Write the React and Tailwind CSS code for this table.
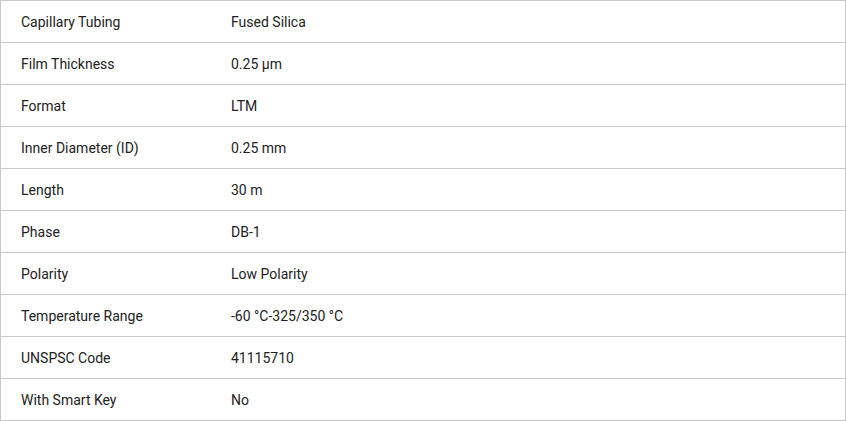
import React from "react";

const rows = [
  ["Capillary Tubing", "Fused Silica"],
  ["Film Thickness", "0.25 µm"],
  ["Format", "LTM"],
  ["Inner Diameter (ID)", "0.25 mm"],
  ["Length", "30 m"],
  ["Phase", "DB-1"],
  ["Polarity", "Low Polarity"],
  ["Temperature Range", "-60 °C-325/350 °C"],
  ["UNSPSC Code", "41115710"],
  ["With Smart Key", "No"],
];

export default function App() {
  return (
    <div className="w-[846px] bg-white font-['Roboto',sans-serif] text-[14px] text-[#222]">
      <div className="border-x border-t border-[#c8c8c8]">
        {rows.map(([label, value]) => (
          <div
            key={label}
            className="flex h-[42px] items-center border-b border-[#c8c8c8] pt-px"
          >
            <div className="w-[230px] pl-5">{label}</div>
            <div className="flex-1">{value}</div>
          </div>
        ))}
      </div>
    </div>
  );
}
